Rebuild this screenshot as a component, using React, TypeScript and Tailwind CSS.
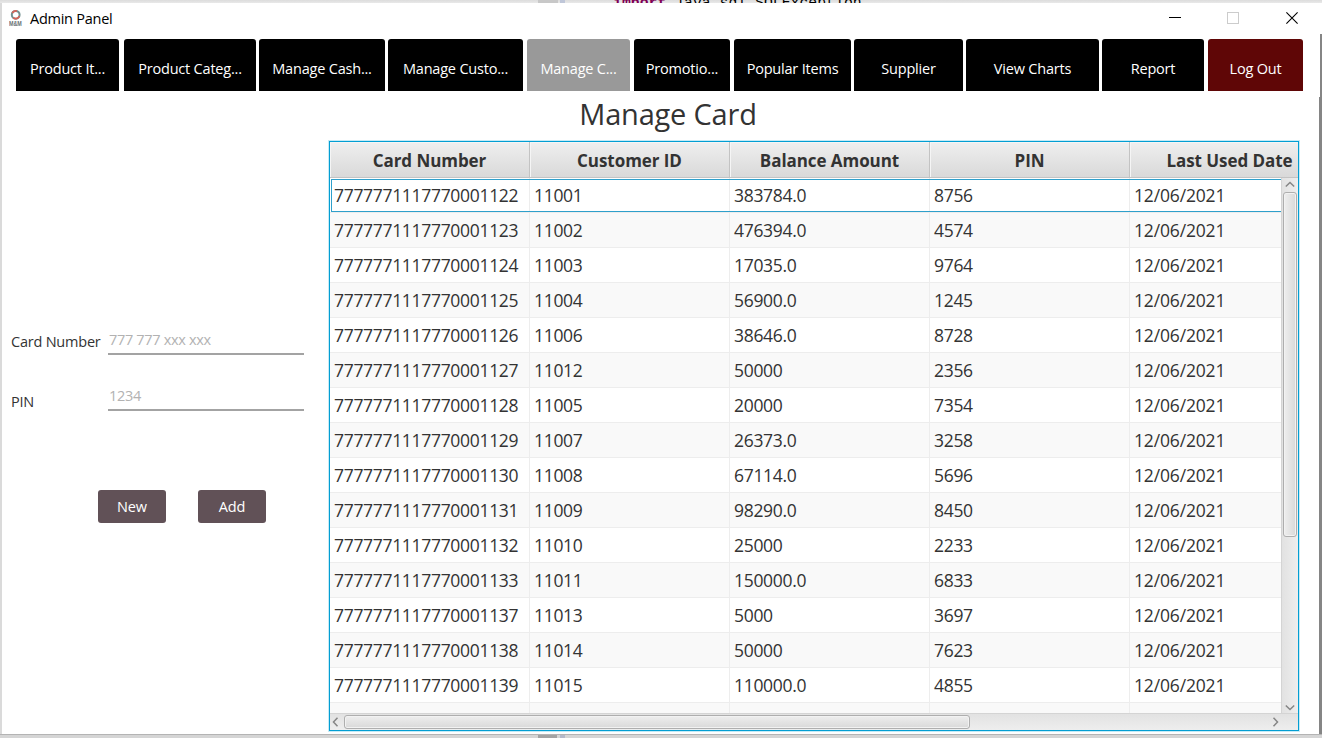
type Tab = { label: string; box: string };

const tabs: Tab[] = [
  { label: 'Product It...', box: 'w-[103px] mr-[5px] bg-black' },
  { label: 'Product Categ...', box: 'w-[132px] mr-[3px] bg-black' },
  { label: 'Manage Cash...', box: 'w-[126px] mr-[3px] bg-black' },
  { label: 'Manage Custo...', box: 'w-[135px] mr-[4px] bg-black' },
  { label: 'Manage C...', box: 'w-[103px] mr-[4px] bg-[#999999]' },
  { label: 'Promotio...', box: 'w-[96px] mr-[4px] bg-black' },
  { label: 'Popular Items', box: 'w-[117px] mr-[3px] bg-black' },
  { label: 'Supplier', box: 'w-[109px] mr-[3px] bg-black' },
  { label: 'View Charts', box: 'w-[133px] mr-[3px] bg-black' },
  { label: 'Report', box: 'w-[102px] mr-[4px] bg-black' },
  { label: 'Log Out', box: 'w-[95px] bg-[#5f0606]' },
];

const columns = ['Card Number', 'Customer ID', 'Balance Amount', 'PIN', 'Last Used Date'];

const rows: string[][] = [
  ['7777771117770001122', '11001', '383784.0', '8756', '12/06/2021'],
  ['7777771117770001123', '11002', '476394.0', '4574', '12/06/2021'],
  ['7777771117770001124', '11003', '17035.0', '9764', '12/06/2021'],
  ['7777771117770001125', '11004', '56900.0', '1245', '12/06/2021'],
  ['7777771117770001126', '11006', '38646.0', '8728', '12/06/2021'],
  ['7777771117770001127', '11012', '50000', '2356', '12/06/2021'],
  ['7777771117770001128', '11005', '20000', '7354', '12/06/2021'],
  ['7777771117770001129', '11007', '26373.0', '3258', '12/06/2021'],
  ['7777771117770001130', '11008', '67114.0', '5696', '12/06/2021'],
  ['7777771117770001131', '11009', '98290.0', '8450', '12/06/2021'],
  ['7777771117770001132', '11010', '25000', '2233', '12/06/2021'],
  ['7777771117770001133', '11011', '150000.0', '6833', '12/06/2021'],
  ['7777771117770001137', '11013', '5000', '3697', '12/06/2021'],
  ['7777771117770001138', '11014', '50000', '7623', '12/06/2021'],
  ['7777771117770001139', '11015', '110000.0', '4855', '12/06/2021'],
  ['', '', '', '', ''],
];

function Chevron({ d, className }: { d: string; className: string }) {
  return (
    <svg className={className} fill="none" stroke="#858585" strokeWidth="1.5">
      <path d={d} />
    </svg>
  );
}

function BackgroundStrip() {
  return (
    <div className="flex h-[3px] shrink-0 overflow-hidden bg-gradient-to-b from-[#dcdcdc] to-[#e9e9e9]">
      <div className="ml-[538px] h-[3px] w-[20px] bg-[#c8c8c8]" />
      <div className="ml-[2px] h-[3px] w-[5px] bg-[#bfc6d8]" />
      <div className="ml-[48px] flex h-[3px] items-start overflow-hidden font-['Liberation_Mono',monospace] text-[14.8px] leading-[15px] whitespace-pre">
        <span className="-mt-[4px] font-bold text-[#7f0055]">import </span>
        <span className="-mt-[4px] text-black">java.sql.SQLException</span>
      </div>
    </div>
  );
}

function TitleBar() {
  return (
    <div className="flex h-[36px] shrink-0 items-start">
      <svg className="mt-[6px] ml-[7px] h-[20px] w-[14px]" viewBox="0 0 14 20">
        <circle cx="6.7" cy="5.8" r="3.9" fill="none" stroke="#719090" strokeWidth="2" />
        <path d="M3.3 4A3.9 3.9 0 0 1 8 2.2M10.3 7.2A3.9 3.9 0 0 1 4.2 8.8" fill="none" stroke="#d76358" strokeWidth="1.8" />
        <text x="0" y="17.3" fontSize="7.6" fontWeight="700" fontFamily="Liberation Sans, sans-serif" fill="#687073" textLength="12.8" lengthAdjust="spacingAndGlyphs">
          M&amp;M
        </text>
      </svg>
      <span className="mt-[6px] ml-[7px] flex-1 text-[14.5px] leading-[20px] tracking-[-0.25px] text-black">Admin Panel</span>
      <svg className="mt-[8px] mr-[20px] h-[15px] w-[132px]" viewBox="0 0 132 15" fill="none" shapeRendering="crispEdges">
        <path d="M2 6.5H14" stroke="#000" />
        <rect x="60.5" y="1.5" width="11" height="11" stroke="#cccccc" />
        <path d="M119.4 1.4L130.6 12.6M130.6 1.4L119.4 12.6" stroke="#000" strokeWidth="1.1" shapeRendering="auto" />
      </svg>
    </div>
  );
}

function Field({ label, hint, box, labelBox }: { label: string; hint: string; box: string; labelBox: string }) {
  return (
    <div className={`flex ${box}`}>
      <label className={`w-[97px] shrink-0 text-[14.5px] leading-[20px] tracking-[-0.22px] whitespace-nowrap text-[#333] ${labelBox}`}>{label}</label>
      <div className="h-[28px] w-[196px] border-b-2 border-[#a3a3a3] pl-[1px] text-[14.5px] leading-[26px] tracking-[-0.32px] text-[#b2b2b2]">
        {hint}
      </div>
    </div>
  );
}

function CardTable() {
  return (
    <div className="flex h-[590px] w-[970px] shrink-0 flex-col overflow-hidden border border-[#039ed3] bg-white shadow-[0_0_0_1px_#c5ebf6]">
      <div className="flex h-[36px] shrink-0 overflow-hidden border-b border-[#c3c3c3] bg-gradient-to-b from-[#efefef] to-[#d9d9d9]">
        {columns.map((name) => (
          <div
            key={name}
            className="flex h-[35px] w-[200px] shrink-0 items-center justify-center border-r border-[#c3c3c3] pt-[2px] text-[17px] font-bold tracking-[-0.06px] whitespace-nowrap text-[#333] shadow-[inset_1px_1px_0_#f5f5f5]"
          >
            {name}
          </div>
        ))}
      </div>
      <div className="flex h-[535px] shrink-0">
        <div className="flex w-[951px] flex-col overflow-hidden">
          {rows.map((cells, i) => (
            <div key={i} className={`relative flex h-[35px] shrink-0 ${i % 2 ? 'bg-[#f9f9f9]' : 'bg-white'}`}>
              {cells.map((cell, c) => (
                <div
                  key={c}
                  className={`flex h-[35px] w-[200px] shrink-0 items-center border-r border-b border-[#ededed] pl-[4px] text-[17.5px] text-[#333] ${c === 4 ? 'tracking-[-0.16px]' : 'tracking-[-0.31px]'}`}
                >
                  {cell}
                </div>
              ))}
              {i === 0 && <div className="absolute top-[1px] left-[1px] h-[33px] w-[960px] border border-[#2fa0cb]" />}
            </div>
          ))}
        </div>
        <div className="flex w-[17px] flex-col items-center border-l border-[#d4d4d4] bg-gradient-to-r from-[#e2e2e2] to-[#eeeeee]">
          <Chevron className="mt-[3px] h-[7px] w-[10px]" d="M0.8 5.5L5 1.5L9.2 5.5" />
          <div className="mt-[4px] h-[345px] w-[14px] rounded-[3px] border border-[#aeaeae] bg-gradient-to-r from-[#eeeeee] to-[#d9d9d9] shadow-[inset_0_0_0_1px_#f2f2f2]" />
          <Chevron className="mt-auto mb-[2px] h-[7px] w-[10px]" d="M0.8 1.5L5 5.5L9.2 1.5" />
        </div>
      </div>
      <div className="flex h-[17px] shrink-0 items-center border-t border-[#d4d4d4] bg-gradient-to-b from-[#e2e2e2] to-[#eeeeee]">
        <Chevron className="ml-[2px] h-[10px] w-[7px]" d="M5.5 0.8L1.5 5L5.5 9.2" />
        <div className="ml-[5px] h-[14px] w-[626px] rounded-[3px] border border-[#aeaeae] bg-gradient-to-b from-[#eeeeee] to-[#d9d9d9] shadow-[inset_0_0_0_1px_#f2f2f2]" />
        <Chevron className="mr-[19px] ml-auto h-[10px] w-[7px]" d="M1.5 0.8L5.5 5L1.5 9.2" />
      </div>
    </div>
  );
}

export default function App() {
  return (
    <div className="flex h-[738px] w-[1322px] flex-col overflow-hidden bg-[#d5d5d5] font-['Open_Sans','Noto_Sans',sans-serif]">
      <BackgroundStrip />
      <div className="flex h-[731px] shrink-0">
        <div className="w-[2px] shrink-0 bg-[#dadada]" />
        <div className="flex w-[1317px] shrink-0 flex-col bg-white">
          <TitleBar />
          <nav className="flex h-[52px] shrink-0 pl-[14px]">
            {tabs.map((tab) => (
              <div
                key={tab.label}
                className={`flex h-[52px] shrink-0 justify-center rounded-t-[3px] pt-[20px] text-[14.5px] leading-[20px] tracking-[-0.2px] whitespace-nowrap text-white ${tab.box}`}
              >
                {tab.label}
              </div>
            ))}
          </nav>
          <h1 className="h-[50px] shrink-0 pt-[3px] pl-[15px] text-center text-[29px] leading-[40px] tracking-[-0.2px] text-[#333]">Manage Card</h1>
          <main className="flex">
            <section className="flex w-[327px] shrink-0 flex-col pl-[9px]">
              <Field label="Card Number" hint="777 777 xxx xxx" box="mt-[186px]" labelBox="pt-[5px]" />
              <Field label="PIN" hint="1234" box="mt-[28px]" labelBox="pt-[9px]" />
              <div className="mt-[78px] flex gap-[32px] pl-[87px]">
                {['New', 'Add'].map((label) => (
                  <button key={label} className="h-[33px] w-[68px] rounded-[3px] bg-[#615157] text-[14.5px] tracking-[-0.15px] text-white">
                    {label}
                  </button>
                ))}
              </div>
            </section>
            <CardTable />
          </main>
        </div>
        <div className="flex w-[3px] flex-col items-end bg-white">
          <div className="mt-[31px] h-[63px] w-[2px] bg-[#858585]" />
          <div className="w-[3px] flex-1 bg-[#858585]" />
        </div>
      </div>
      <div className="flex h-[4px] border-t border-[#b4b4b4]">
        <div className="ml-[538px] h-[3px] w-[19px] bg-[#a3a3a3]" />
        <div className="ml-[3px] h-[3px] w-[5px] bg-[#b4b9ca]" />
      </div>
    </div>
  );
}
